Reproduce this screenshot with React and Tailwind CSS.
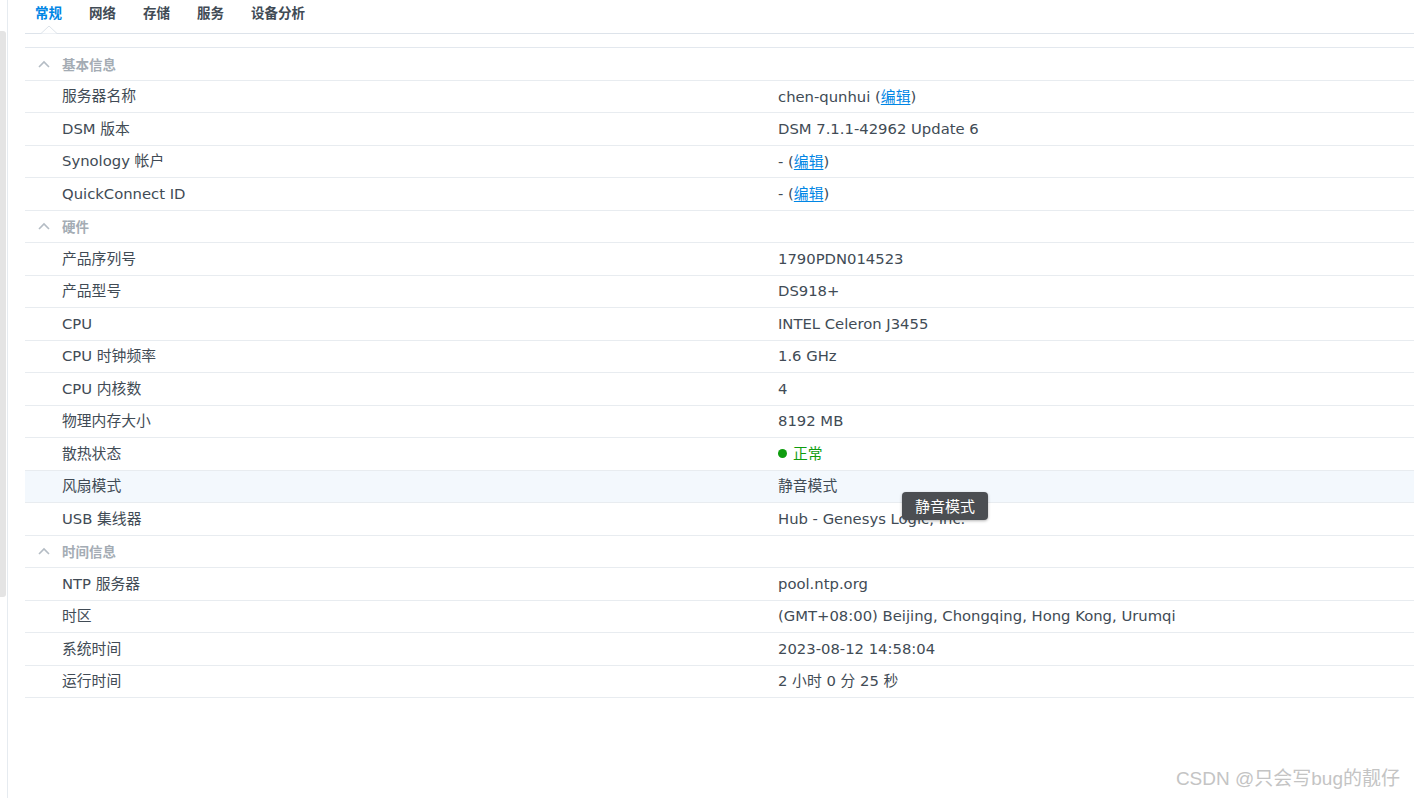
import React from "react";

const font = { fontFamily: '"DejaVu Sans", "Noto Sans CJK SC", sans-serif' };
const cjk = { fontFamily: '"Noto Sans CJK SC", sans-serif' };

function Edit() {
  return <a className="text-[#0086e5] underline underline-offset-2" style={cjk}>编辑</a>;
}

const sections = [
  {
    title: "基本信息",
    rows: [
      ["服务器名称", <span>chen-qunhui (<Edit />)</span>],
      ["DSM 版本", "DSM 7.1.1-42962 Update 6"],
      ["Synology 帐户", <span>- (<Edit />)</span>],
      ["QuickConnect ID", <span>- (<Edit />)</span>],
    ],
  },
  {
    title: "硬件",
    rows: [
      ["产品序列号", "1790PDN014523"],
      ["产品型号", "DS918+"],
      ["CPU", "INTEL Celeron J3455"],
      ["CPU 时钟频率", "1.6 GHz"],
      ["CPU 内核数", "4"],
      ["物理内存大小", "8192 MB"],
      [
        "散热状态",
        <span className="flex items-center gap-[6px] text-[#0f9d0f]">
          <span className="inline-block w-[9px] h-[9px] rounded-full bg-[#0f9d0f]" />
          正常
        </span>,
      ],
      ["风扇模式", "静音模式", true],
      ["USB 集线器", "Hub - Genesys Logic, Inc."],
    ],
  },
  {
    title: "时间信息",
    rows: [
      ["NTP 服务器", "pool.ntp.org"],
      ["时区", "(GMT+08:00) Beijing, Chongqing, Hong Kong, Urumqi"],
      ["系统时间", "2023-08-12 14:58:04"],
      ["运行时间", "2 小时 0 分 25 秒"],
    ],
  },
];

function Chevron() {
  return (
    <svg width="12" height="8" viewBox="0 0 12 8" className="ml-[13px] mr-[12px]">
      <path d="M1 7 L6 2 L11 7" fill="none" stroke="#b4bcc4" strokeWidth="1.6" />
    </svg>
  );
}

export default function App() {
  return (
    <div className="relative w-[1414px] h-[798px] bg-white overflow-hidden flex text-[#414b55]" style={font}>
      <div className="w-[8px] shrink-0 border-r border-[#e6ebf0]">
        <div className="mt-[31px] h-[566px] w-[6px] bg-[#e4e4e4] rounded-r-[3px]" />
      </div>
      <div className="flex-1 pl-[17px]">
        <div className="relative h-[34px] border-b border-[#dde3ea] flex items-start pt-[2px] pl-[10px] gap-[27px] text-[13.5px] font-bold" style={cjk}>
          <span className="text-[#0086e5]">常规</span>
          <span>网络</span>
          <span>存储</span>
          <span>服务</span>
          <span>设备分析</span>
          <svg width="16" height="9" viewBox="0 0 16 9" className="absolute left-[16px] top-[25px]">
            <path d="M0 8.5 L8 1 L16 8.5" fill="white" stroke="#dde3ea" strokeWidth="1" />
          </svg>
        </div>
        <div className="mt-[13px] border-t border-[#e3e8ee]">
          {sections.map((s) => (
            <div key={s.title}>
              <div className="h-[32.5px] border-b border-[#e8ecf0] flex items-center text-[13.5px] font-bold text-[#a4acb4]" style={cjk}>
                <Chevron />
                {s.title}
              </div>
              {s.rows.map(([k, v, hl]) => (
                <div
                  key={k}
                  className={`h-[32.5px] border-b border-[#e8ecf0] grid grid-cols-[753px_1fr] items-center text-[14.8px] ${hl ? "bg-[#f3f8fd]" : ""}`}
                >
                  <span className="pl-[37px]">{k}</span>
                  <span>{v}</span>
                </div>
              ))}
            </div>
          ))}
        </div>
      </div>
      <div className="absolute left-[902px] top-[492px] w-[86px] h-[28px] rounded-[4px] bg-[#4b4e52] text-white text-[15px] flex items-center justify-center shadow-[0_1px_3px_rgba(0,0,0,0.3)]" style={cjk}>
        静音模式
      </div>
      <div className="absolute right-[14px] top-[765px] text-[19px] text-[#c4c4c4]" style={{ fontFamily: '"Liberation Sans", "Noto Sans CJK SC", sans-serif' }}>
        CSDN @只会写bug的靓仔
      </div>
    </div>
  );
}
